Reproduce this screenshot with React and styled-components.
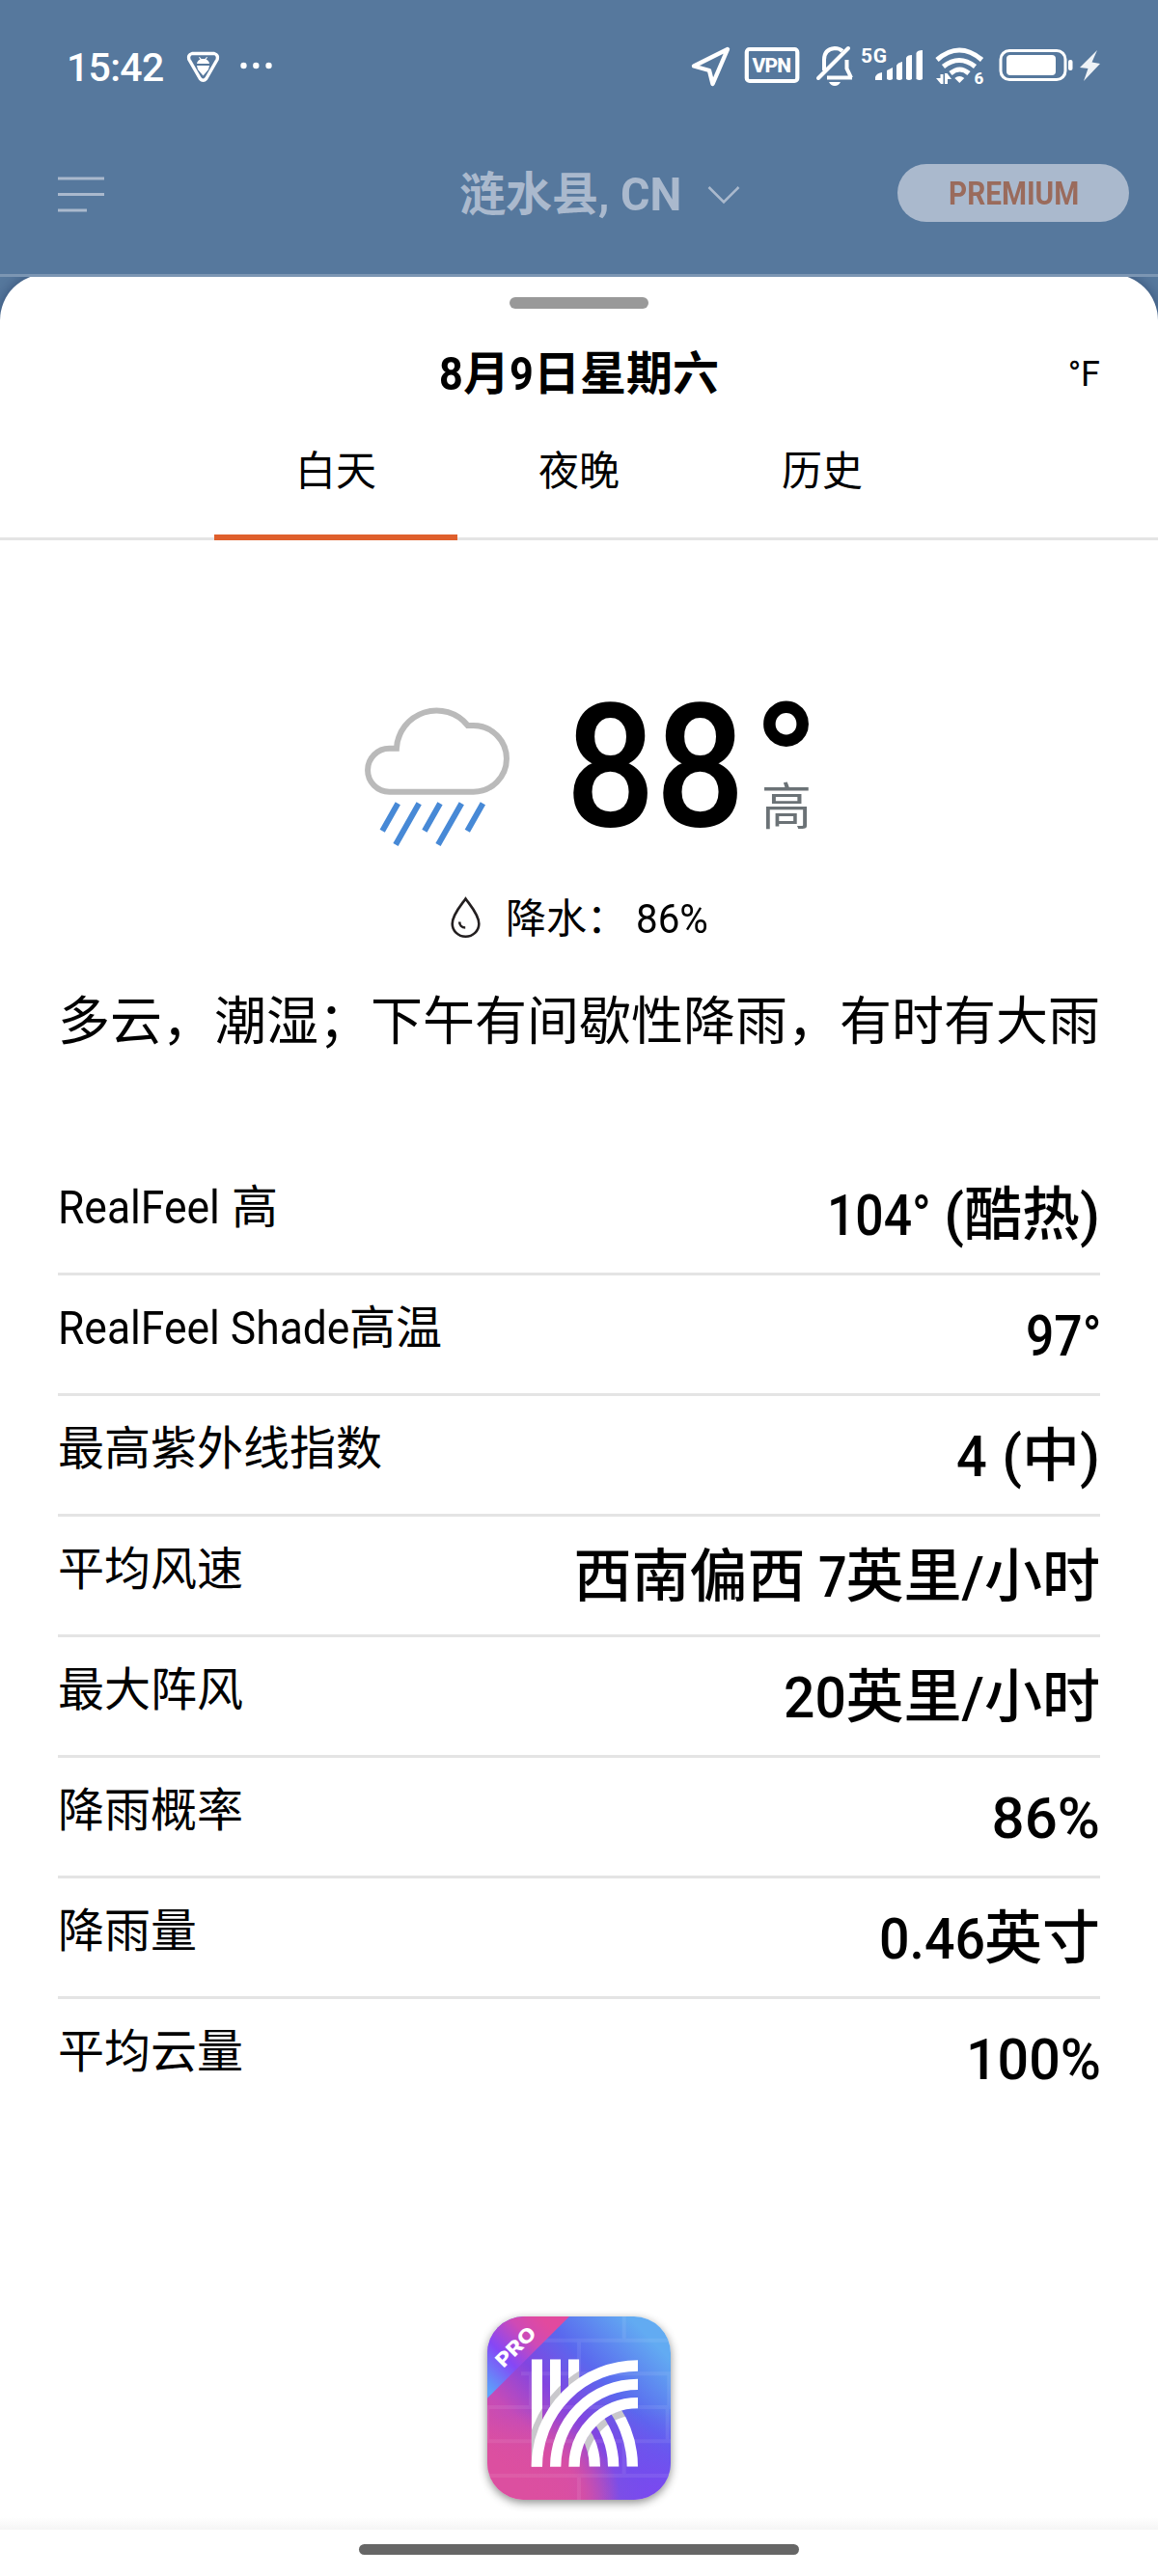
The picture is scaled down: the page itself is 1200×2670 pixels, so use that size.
import React from "react";
import styled, { createGlobalStyle } from "styled-components";

const GlobalStyle = createGlobalStyle`
  *, *::before, *::after { box-sizing: border-box; }
  body { margin: 0; background: #fff; }
  svg { display: block; flex: none; overflow: visible; }
`;

const Screen = styled.div`
  width: 1200px;
  height: 2670px;
  overflow: hidden;
  display: flex;
  flex-direction: column;
  background: #56789d;
  color: #000;
  font-family: Roboto, "Noto Sans CJK SC", sans-serif;
  white-space: nowrap;
`;

/* Latin run set narrower than the CJK text around it */
const Narrow = styled.span`
  display: inline-block;
  width: ${(p) => p.$w}px;
  transform: scaleX(${(p) => p.$x});
  transform-origin: 0 50%;
  white-space: pre;
`;

/* ---------- top area ---------- */
const TopArea = styled.header`
  position: relative;
  z-index: 1;
  flex: none;
  height: 287px;
  border-bottom: 3px solid #7c96b3;
  background: #56789d;
`;

const StatusBar = styled.div`
  height: 134px;
  display: flex;
  align-items: flex-start;
  padding: 48px 55px 0 69px;
  color: #fff;
`;

const Clock = styled.div`
  width: 121px;
  padding-top: 1px;
  font-size: 41px;
  line-height: 42px;
  font-weight: 500;
  letter-spacing: -0.7px;
`;

const StatusIcons = styled.div`
  display: flex;
  margin-left: auto;
`;

const AppBar = styled.div`
  height: 132px;
  display: flex;
  align-items: center;
  padding: 0 30px 0 60px;
  color: #aab9cd;
`;

const Place = styled.div`
  display: flex;
  align-items: center;
  padding-top: 3px;
  margin-left: 368px;
  font-size: 48px;
  line-height: 60px;
  font-weight: 700;
`;

const PremiumPill = styled.button`
  width: 240px;
  height: 60px;
  margin-left: auto;
  padding: 1px 0 0 53px;
  border: 0;
  border-radius: 30px;
  background: #aab9cd;
  color: #9a6b5c;
  font: 700 33px/60px Roboto, sans-serif;
  text-align: left;
`;

/* ---------- sheet ---------- */
const Sheet = styled.main`
  flex: 1;
  margin-top: -3px;
  padding-top: 24px;
  border-radius: 48px 48px 0 0;
  background: #fff;
  box-shadow: 0 0 14px rgba(0, 20, 60, 0.4);
  display: flex;
  flex-direction: column;
`;

const Handle = styled.div`
  flex: none;
  width: 144px;
  height: 12px;
  margin: 0 auto;
  border-radius: 6px;
  background: #999;
`;

const TitleRow = styled.div`
  flex: none;
  height: 114px;
  display: grid;
  grid-template-columns: 1fr auto 1fr;
  align-items: center;
  padding: 22px 60px 0;
`;

const DateTitle = styled.h1`
  grid-column: 2;
  margin: 0;
  font-size: 48px;
  line-height: 60px;
  font-weight: 700;
`;

const Unit = styled.div`
  justify-self: end;
  font-size: 36px;
  line-height: 60px;
`;

const Tabs = styled.nav`
  flex: none;
  height: 126px;
  display: flex;
  justify-content: center;
  box-shadow: inset 0 -3px #e4e4e4;
`;

const Tab = styled.div`
  width: 252px;
  padding-top: 2px;
  font-size: 42px;
  line-height: 106px;
  text-align: center;
  box-shadow: ${(p) => (p.$active ? "inset 0 -6px #df5f2c" : "none")};
`;

const Hero = styled.section`
  flex: none;
  height: 325px;
  display: flex;
  padding: 165px 0 0 375px;
`;

const Temperature = styled.div`
  margin: -10px 0 0 55px;
  font-size: 178px;
  line-height: 160px;
  font-weight: 500;
`;

const TempSide = styled.div`
  display: flex;
  flex-direction: column;
  margin-left: 12px;
`;

const Degree = styled.div`
  height: 82px;
  font-size: 178px;
  line-height: 138px;
  font-weight: 700;
`;

const HighMark = styled.div`
  padding-left: 9px;
  font-size: 52px;
  line-height: 62px;
  color: #6b7276;
`;

const Precipitation = styled.div`
  flex: none;
  height: 60px;
  margin-top: 36px;
  padding-left: 465px;
  display: flex;
  align-items: center;
  font-size: 42px;
  line-height: 60px;
`;

const PrecipLabel = styled.span`
  margin: 0 9px 0 24px;
`;

const PrecipText = styled.div`
  padding-top: 3px;
`;

const Summary = styled.p`
  flex: none;
  margin: 40px 60px 0;
  font-size: 54px;
  line-height: 77px;
`;

const Details = styled.dl`
  flex: none;
  margin: 99px 60px 0;
`;

const DetailRow = styled.div`
  height: 125px;
  display: flex;
  justify-content: space-between;
  border-bottom: 3px solid #e4e4e4;
  &:last-child { border-bottom-color: transparent; }
`;

const DetailLabel = styled.dt`
  font-size: 48px;
  line-height: 109px;
`;

const DetailValue = styled.dd`
  margin: 0;
  font-size: 60px;
  line-height: 125px;
  font-weight: 500;
`;

const Sponsor = styled.div`
  flex: none;
  width: 190px;
  height: 190px;
  margin: 204px auto 0;
  border-radius: 38px;
  overflow: hidden;
  box-shadow: 0 3px 10px rgba(0, 0, 0, 0.45);
`;

const Fade = styled.div`
  flex: none;
  height: 13px;
  margin-top: 18px;
  background: linear-gradient(#fff, #f5f5f5);
`;

const HomeBar = styled.div`
  flex: none;
  width: 456px;
  height: 11px;
  margin: 15px auto 0;
  border-radius: 6px;
  background: #666;
`;

/* ---------- drawings ---------- */
function ShieldIcon() {
  return (
    <svg width="40" height="42" viewBox="190 48 40 42" fill="none">
      <path d="M199 55.500h23q4.500 1.500 3.200 6l-11.500 20q-3.200 3.500-6.400 0l-11.500-20q-1.300-4.500 3.200-6z" stroke="#fff" strokeWidth="3.400" strokeLinejoin="round" />
      <path d="M204 66q.500-3.500 3.500-4.500l-1.500-2 .8-.6 1.800 2h3.800l1.800-2 .8.6-1.500 2q3 1 3.500 4.500zM204 68h13l-1 4-5.500 6.500L205 72z" fill="#fff" />
    </svg>
  );
}

function MoreDots() {
  return (
    <svg width="44" height="42" viewBox="230 48 44 42" fill="#fff">
      <circle cx="252.500" cy="68" r="3.200" />
      <circle cx="265.300" cy="68" r="3.200" />
      <circle cx="278.500" cy="68" r="3.200" />
    </svg>
  );
}

function StatusGlyphs() {
  return (
    <StatusIcons>
      <svg width="50" height="42" viewBox="714 48 50 42" fill="none">
        <path d="M754 51 719 68.500l16 4.500 3.500 14z" stroke="#fff" strokeWidth="4.400" strokeLinejoin="round" />
      </svg>
      <svg width="73" height="42" viewBox="764 48 73 42">
        <rect x="773.800" y="51" width="52.500" height="33" rx="3" fill="none" stroke="#fff" strokeWidth="4.200" />
        <text x="779.500" y="74.700" textLength="40.500" fontFamily="Roboto, sans-serif" fontWeight="800" fontSize="21" fill="#fff">VPN</text>
      </svg>
      <svg width="51" height="42" viewBox="837 48 51 42" fill="none" stroke="#fff" strokeWidth="4">
        <path d="M854 73V62q0-11 11-12 5 0 8 3M877.500 62v9l4.500 9.500M857 80.500h26" />
        <path d="M848 81l31-31" strokeLinecap="round" />
        <path d="M859 85h12q-2 4-6 4t-6-4z" fill="#fff" stroke="none" />
      </svg>
      <svg width="74" height="42" viewBox="888 48 74 42" fill="#fff">
        <text x="892" y="65" textLength="27" fontFamily="Roboto, sans-serif" fontWeight="700" fontSize="21">5G</text>
        <path d="M907 83v-3q1-4 7-5v8zM919 82V73l6-3v12q-3 2-6 0zM929 82V68q1-3 6-4v18q-3 2-6 0zM939 82V60q1-3 6-3v25q-3 2-6 0zM949.500 82V55q1-3 6.500-3v30q-3 2-6.500 0z" />
      </svg>
      <svg width="65" height="42" viewBox="962 48 65 42" fill="none">
        <path d="M971 62q23-20 46.500 0M977.500 69q16.500-13 33 0M985 76q9.500-8 19 0" stroke="#fff" strokeWidth="5" />
        <path d="M994.300 86l-5-5q5-4 10 0zM974.500 77h3v10h-2.500l-5-6h4.500zM979 87V76h2.500l4.500 6h-4v5z" fill="#fff" />
        <text x="1009.500" y="87" fontFamily="Roboto, sans-serif" fontWeight="800" fontSize="17" fill="#fff">6</text>
      </svg>
      <svg width="118" height="42" viewBox="1027 48 118 42">
        <rect x="1037" y="52.500" width="67" height="30" rx="9" fill="none" stroke="#fff" strokeWidth="3" />
        <rect x="1043" y="57" width="51" height="21" rx="4" fill="#fff" />
        <rect x="1107" y="62" width="4.500" height="11" rx="2" fill="#fff" />
        <path d="M1137 52l-18 18 8.500 1-4.500 13 17-18-8.500-1.500z" fill="#eef2f6" />
      </svg>
    </StatusIcons>
  );
}

function MenuIcon() {
  return (
    <svg width="48" height="40" viewBox="60 180 48 40" stroke="#aab9cd" strokeWidth="3.200">
      <path d="M60 185h48M60 201.500h48M60 218h30" />
    </svg>
  );
}

const ChevronSvg = styled.svg`
  margin-left: 24px;
`;

function ChevronIcon() {
  return (
    <ChevronSvg width="36" height="20" viewBox="0 0 36 20" fill="none">
      <path d="M2.500 2 18 17.500 33.500 2" stroke="#aab9cd" strokeWidth="2.600" />
    </ChevronSvg>
  );
}

function RainCloud() {
  return (
    <svg width="156" height="160" viewBox="375 725 156 160" fill="none" strokeWidth="6">
      <path d="M410.900 775.800H403.500a22.450 22.450 0 0 0 0 44.900H490.600a34.350 34.350 0 0 0 0-68.700H484.700a41.500 41.500 0 0 0-73.800 23.800z" stroke="#bababa" />
      <path d="M412.300 832.700 396.200 861.200M434.200 832.700 410 875.500M456 832.700 439.900 861.200M478.300 832.700 454 875.500M500.400 832.700 484.300 861.200" stroke="#4789d6" />
    </svg>
  );
}

function DropIcon() {
  return (
    <svg width="35" height="46" viewBox="465 928 35 46" fill="none" stroke="#231f20" strokeWidth="2.600">
      <path d="M482.500 931.500C478 938 468.700 948 468.700 957.500a13.800 13.300 0 0 0 27.600 0C496.300 948 487 938 482.500 931.500z" />
      <path d="M476.200 955.500c0 3.500 2.500 6 6 6" />
    </svg>
  );
}

function SponsorLogo() {
  return (
    <svg width="190" height="190" viewBox="75 93 570 570">
      <defs>
        <linearGradient id="base" gradientUnits="userSpaceOnUse" x1="130" y1="560" x2="560" y2="140">
          <stop offset="0" stopColor="#dc4fa0" />
          <stop offset="0.220" stopColor="#c44bb8" />
          <stop offset="0.450" stopColor="#8245e0" />
          <stop offset="0.680" stopColor="#5a68ee" />
          <stop offset="1" stopColor="#62abf2" />
        </linearGradient>
        <radialGradient id="violet" gradientUnits="userSpaceOnUse" cx="610" cy="660" r="290">
          <stop offset="0" stopColor="#7c48f0" />
          <stop offset="0.450" stopColor="#6f50f0" stopOpacity="0.750" />
          <stop offset="1" stopColor="#6f50f0" stopOpacity="0" />
        </radialGradient>
        <radialGradient id="pink" gradientUnits="userSpaceOnUse" cx="200" cy="680" r="290">
          <stop offset="0" stopColor="#dc4fa0" />
          <stop offset="0.600" stopColor="#dc4fa0" stopOpacity="0.800" />
          <stop offset="1" stopColor="#dc4fa0" stopOpacity="0" />
        </radialGradient>
        <linearGradient id="ribbon" gradientUnits="userSpaceOnUse" x1="75" y1="320" x2="270" y2="125">
          <stop offset="0" stopColor="#5ba2fa" />
          <stop offset="0.400" stopColor="#8547f6" />
          <stop offset="0.750" stopColor="#cf4ab5" />
          <stop offset="1" stopColor="#e24a9e" />
        </linearGradient>
        <clipPath id="bars"><path d="M212 226h34v334h-34zM270 226h33v149h-33zM327 226h34v88h-34z" /></clipPath>
        <clipPath id="inner"><circle cx="543" cy="560" r="182" /></clipPath>
        <clipPath id="floor"><path d="M75 93H543V560H75z" /></clipPath>
        <mask id="legs">
          <g fill="none" stroke="#fff" strokeWidth="34">
            <circle cx="212" cy="560" r="314" />
            <circle cx="212" cy="560" r="255" />
            <circle cx="212" cy="560" r="197" />
          </g>
        </mask>
      </defs>
      <path d="M75 93h570v570H75z" fill="url(#base)" />
      <path d="M75 93h570v570H75z" fill="url(#violet)" />
      <path d="M75 93h570v570H75z" fill="url(#pink)" />
      <path d="M230 167H645M180 271H645M75 375H645M75 481H645M75 588H645M500 93v74M360 167v104M640 271v104M210 271v104M75 375v106M635 375v106M360 588v75M500 481v107" stroke="#fff" strokeOpacity="0.080" strokeWidth="12" fill="none" />
      <path d="M75 93H330L75 347z" fill="url(#ribbon)" />
      <text transform="translate(125 255) rotate(-45)" textLength="150" lengthAdjust="spacingAndGlyphs" fontFamily="Inter, sans-serif" fontWeight="800" fontSize="60" fill="#fff">PRO</text>
      <g clipPath="url(#bars)">
        <path d="M200 220h170v340H200z" fill="#fff" />
        <circle cx="543" cy="560" r="338" fill="none" stroke="#c9c8cc" strokeWidth="22" />
      </g>
      <g clipPath="url(#floor)">
        <g clipPath="url(#inner)">
          <g mask="url(#legs)">
            <path d="M340 360h210v200H340z" fill="#fff" />
            <circle cx="543" cy="560" r="171" fill="none" stroke="#c9c8cc" strokeWidth="22" />
          </g>
        </g>
        <g fill="none" stroke="#fff" strokeWidth="34">
          <circle cx="543" cy="560" r="314" />
          <circle cx="543" cy="560" r="256" />
          <circle cx="543" cy="560" r="198" />
        </g>
      </g>
    </svg>
  );
}

const details = [
  {
    label: <><Narrow $w={180} $x={0.925}>RealFeel </Narrow>高</>,
    value: <><Narrow $w={121} $x={0.86}>104° </Narrow>(酷热)</>,
  },
  {
    label: <><Narrow $w={302} $x={0.925}>RealFeel Shade</Narrow>高温</>,
    value: <Narrow $w={77} $x={0.86}>97°</Narrow>,
  },
  { label: "最高紫外线指数", value: <><Narrow $w={47} $x={0.93}>4 </Narrow>(中)</> },
  { label: "平均风速", value: <>西南偏西<Narrow $w={42} $x={0.87}> 7</Narrow>英里/小时</> },
  { label: "最大阵风", value: <><Narrow $w={65} $x={0.95}>20</Narrow>英里/小时</> },
  { label: "降雨概率", value: "86%" },
  { label: "降雨量", value: <><Narrow $w={109} $x={0.925}>0.46</Narrow>英寸</> },
  { label: "平均云量", value: <Narrow $w={139} $x={0.955}>100%</Narrow> },
];

export default function App() {
  return (
    <Screen lang="zh-CN">
      <GlobalStyle />
      <TopArea>
        <StatusBar>
          <Clock>15:42</Clock>
          <ShieldIcon />
          <MoreDots />
          <StatusGlyphs />
        </StatusBar>
        <AppBar>
          <MenuIcon />
          <Place>
            <span>涟水县<Narrow $w={88} $x={0.97}>, CN</Narrow></span>
            <ChevronIcon />
          </Place>
          <PremiumPill><Narrow $w={134} $x={0.9}>PREMIUM</Narrow></PremiumPill>
        </AppBar>
      </TopArea>
      <Sheet>
        <Handle />
        <TitleRow>
          <DateTitle>
            <Narrow $w={25} $x={0.9}>8</Narrow>月<Narrow $w={25} $x={0.9}>9</Narrow>日星期六
          </DateTitle>
          <Unit>°F</Unit>
        </TitleRow>
        <Tabs>
          <Tab $active>白天</Tab>
          <Tab>夜晚</Tab>
          <Tab>历史</Tab>
        </Tabs>
        <Hero>
          <RainCloud />
          <Temperature><Narrow $w={182} $x={0.92}>88</Narrow></Temperature>
          <TempSide>
            <Degree>°</Degree>
            <HighMark>高</HighMark>
          </TempSide>
        </Hero>
        <Precipitation>
          <DropIcon />
          <PrecipText>
            <PrecipLabel>降水：</PrecipLabel>
            <Narrow $w={76} $x={0.96}>86%</Narrow>
          </PrecipText>
        </Precipitation>
        <Summary>多云，潮湿；下午有间歇性降雨，有时有大雨</Summary>
        <Details>
          {details.map((d, i) => (
            <DetailRow key={i}>
              <DetailLabel>{d.label}</DetailLabel>
              <DetailValue>{d.value}</DetailValue>
            </DetailRow>
          ))}
        </Details>
        <Sponsor><SponsorLogo /></Sponsor>
        <Fade />
        <HomeBar />
      </Sheet>
    </Screen>
  );
}
